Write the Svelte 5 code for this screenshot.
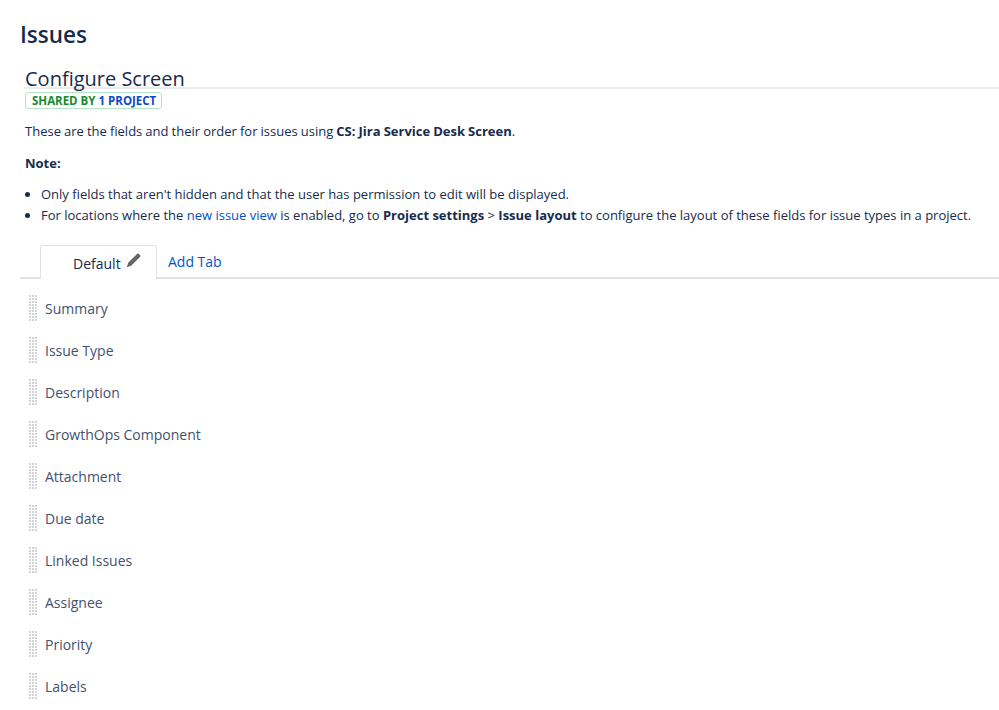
<script>
  const fields = ['Summary','Issue Type','Description','GrowthOps Component','Attachment','Due date','Linked Issues','Assignee','Priority','Labels'];
</script>

<div class="page">
  <h1>Issues</h1>
  <section class="panel">
    <div class="head"><h2>Configure Screen</h2></div>
    <div class="badge"><span class="g">SHARED BY</span> <span class="b">1 PROJECT</span></div>
    <p class="intro">These are the fields and their order for issues using <b>CS: Jira Service Desk Screen</b>.</p>
    <p class="note"><b>Note:</b></p>
    <ul>
      <li>Only fields that aren't hidden and that the user has permission to edit will be displayed.</li>
      <li>For locations where the <a href="#x">new issue view</a> is enabled, go to <b>Project settings</b> &gt; <b>Issue layout</b> to configure the layout of these fields for issue types in a project.</li>
    </ul>
  </section>
  <div class="tabs">
    <div class="tab active">Default
      <svg width="15" height="16" viewBox="0 0 15 16"><path d="M11.2.8a1 1 0 0 1 1.4 0l1.6 1.6a1 1 0 0 1 0 1.4L5.2 12.8.8 14.2 2.2 9.8Z" fill="#666"/></svg>
    </div>
    <a class="tab add" href="#x">Add Tab</a>
  </div>
  <div class="fields">
    {#each fields as f}
      <div class="row"><span class="grip"></span><span>{f}</span></div>
    {/each}
  </div>
</div>

<style>
  :global(body) { margin: 0; background: #fff; overflow: hidden; }
  .page { height: 710px; overflow: hidden; padding: 20px 0 0 20px; font-family: "Open Sans", "Noto Sans", sans-serif; color: #172b4d; box-sizing: border-box; }
  h1 { margin: 0; font-size: 22.5px; line-height: 30px; font-weight: 600; color: #172b4d; }
  .panel { margin: 15px 0 0 5px; }
  .head { border-bottom: 2px solid #ebecf0; height: 22px; margin-left: -1px; }
  h2 { margin: 0 0 0 1px; font-size: 20px; line-height: 28px; font-weight: 500; color: #172b4d; }
  .badge { display: block; width: fit-content; margin-top: 3px; border: 1px solid #b5e5c5; border-radius: 3px; padding: 0 5px 0 6px; font-size: 11.5px; font-weight: 700; line-height: 15px; }
  .g { color: #1a8a2b; }
  .b { color: #0b49c9; }
  p { margin: 0; font-size: 13px; line-height: 20px; }
  .intro { margin-top: 12px; word-spacing: -0.3px; }
  .note { margin-top: 12px; }
  ul { margin: 11px 0 0; padding: 0 0 0 16px; font-size: 13px; line-height: 21px; }
  a { color: #0052cc; text-decoration: none; }
  .tabs { display: flex; margin-top: 19px; border-bottom: 2px solid #dfe1e6; height: 32px; }
  .tab { font-size: 14px; box-sizing: border-box; height: 34px; line-height: 34px; }
  .active { margin-left: 20px; width: 117px; padding: 2px 0 0 32px; border: 1px solid #dfe1e6; border-bottom: 0; background: #fff; border-radius: 3px 3px 0 0; display: flex; gap: 5px; align-items: center; }
  .active svg { margin-bottom: 6px; }
  .add { margin-left: 11px; line-height: 34px; }
  .fields { padding: 8px 0 0 9px; }
  .row { height: 42px; display: flex; align-items: center; gap: 7px; font-size: 14px; color: #42526e; }
  .grip { width: 9px; height: 26px; background-image: linear-gradient(to right, #d4d4d4 2px, transparent 2px); background-size: 3px 3px; mask-image: linear-gradient(#000 2px, transparent 2px); mask-size: 3px 3px; }
</style>
